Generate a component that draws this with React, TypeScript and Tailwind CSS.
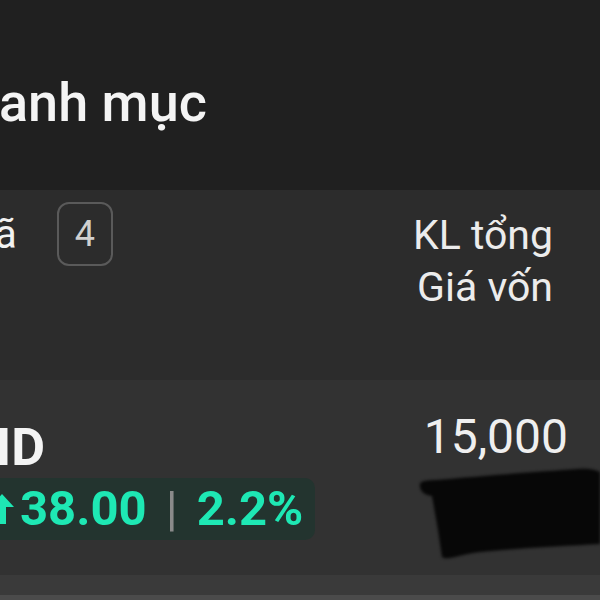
export default function App() {
  return (
    <div className="w-[600px] h-[600px] overflow-hidden bg-[#313131] font-['Roboto','Liberation_Sans',sans-serif] text-white">
      {/* Title bar */}
      <div className="h-[190px] bg-[#202020] pt-[76px]">
        <h1 className="-ml-[1px] text-[54px] leading-[54px] font-medium text-[#f4f4f4] whitespace-nowrap">anh mục</h1>
      </div>

      {/* Column header */}
      <div className="h-[190px] bg-[#2c2c2c] flex justify-between">
        <div className="flex items-start pt-[12px]">
          <span className="-ml-[5px] mt-[7px] text-[40px] leading-[52px] text-[#f2f2f2]">ã</span>
          <div className="ml-[40px] w-[56px] h-[64px] border-2 border-[#5a5a5a] rounded-[12px] flex items-center justify-center text-[36px] text-[#d0d0d0]">
            4
          </div>
        </div>
        <div className="pt-[19px] pr-[47px] text-right text-[41px] leading-[52px] text-[#ececec]">
          <div>KL tổng</div>
          <div>Giá vốn</div>
        </div>
      </div>

      {/* Holding row */}
      <div className="h-[195px] bg-[#323232] flex justify-between">
        <div className="pt-[42px]">
          <div className="-ml-[4px] text-[52px] leading-[52px] font-bold text-[#f4f4f4]">ID</div>
          <div className="mt-[4px] h-[62px] w-[315px] bg-[#23342f] rounded-r-[10px] flex items-center text-[#1ee8b4] font-bold text-[49px] leading-[62px]">
            <svg className="-ml-[10px] mr-[6px] w-[24px] h-[30px] shrink-0" viewBox="0 0 24 30" fill="currentColor">
              <path d="M12 0 L24 13 H16 V30 H8 V13 H0 Z" />
            </svg>
            <span>38.00</span>
            <span className="mx-[19px] font-normal text-[#8a8a8a]">|</span>
            <span>2.2%</span>
          </div>
        </div>
        <div className="pt-[34px] flex flex-col items-end">
          <div className="pr-[32px] text-[48px] leading-[46px] text-[#efefef]">15,000</div>
          <svg className="mt-[6px] w-[182px] h-[98px] blur-[1.5px]" viewBox="0 0 182 98">
            <path
              d="M2 20 C1 13 12 15 32 13 C72 9 130 5 160 3 C170 2 178 4 182 6 L182 78 C150 80 100 82 62 86 C42 88 30 95 24 91 L20 64 L14 30 C6 29 2 25 2 20 Z"
              fill="#070707"
            />
          </svg>
        </div>
      </div>

      {/* Bottom strip */}
      <div className="h-[20px] bg-[#3a3a3a]" />
      <div className="h-[5px] bg-[#4b4b4b]" />
    </div>
  )
}
